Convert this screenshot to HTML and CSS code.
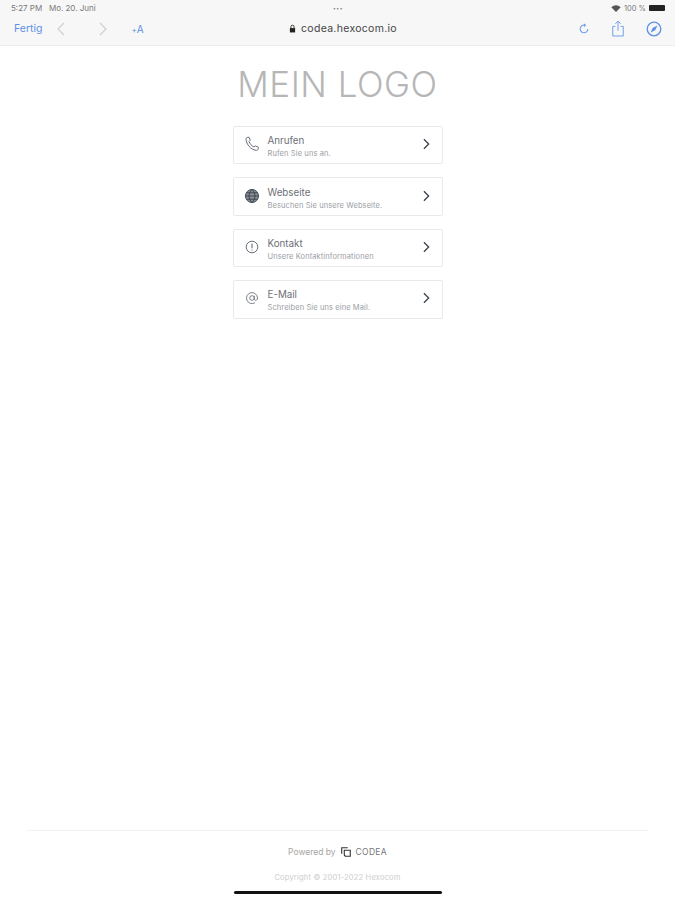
FILE: index.html
```html
<!DOCTYPE html>
<html lang="de">

<head>
    <meta charset="UTF-8">
    <title>codea.hexocom.io</title>
    <link rel="stylesheet" href="styles.css">
</head>

<body>
    <div class="page">
        <header class="browser">
            <div class="status">
                <span class="status-time">5:27 PM&nbsp;&nbsp; Mo. 20. Juni</span>
                <span class="status-dots">•••</span>
                <span class="status-right">
                    <svg class="wifi" viewBox="0 0 12 9" width="10" height="7"><path d="M6 9 0 2.800C3.500-.7 8.500-.7 12 2.800z" fill="#555"/></svg>
                    100 %
                    <span class="battery"></span>
                </span>
            </div>
            <div class="toolbar">
                <div class="tools">
                    <span class="done">Fertig</span>
                    <svg class="nav-back" viewBox="0 0 10 14" width="10" height="14"><path d="M8 1 2 7l6 6" fill="none" stroke="#cfcfd3" stroke-width="1.200"/></svg>
                    <svg class="nav-next" viewBox="0 0 10 14" width="10" height="14"><path d="m2 1 6 6-6 6" fill="none" stroke="#cfcfd3" stroke-width="1.200"/></svg>
                    <span class="reader"><small>+</small>A</span>
                </div>
                <div class="address">
                    <svg viewBox="0 0 8 10" width="7" height="9"><path d="M1 4.500h6V9.500H1z" fill="#222"/><path d="M2.200 4.500V3a1.800 1.800 0 0 1 3.600 0v1.500" fill="none" stroke="#222"/></svg>
                    codea.hexocom.io
                </div>
                <div class="actions">
                    <svg viewBox="0 0 14 14" width="12" height="13"><path d="M11.500 7.500a4.500 4.500 0 1 1-3-4.300" fill="none" stroke="#6f9be8" stroke-width="1.200"/><path d="M6.800 1 9.500 3.200 7 5.300z" fill="#6f9be8"/></svg>
                    <svg viewBox="0 0 16 20" width="14" height="18"><path d="M5 7H2v11h12V7h-3M8 12V1M5 4l3-3 3 3" fill="none" stroke="#6f9be8" stroke-width="1.100"/></svg>
                    <svg viewBox="0 0 16 16" width="16" height="16"><circle cx="8" cy="8" r="6.800" fill="none" stroke="#5f90e8" stroke-width="1.300"/><path d="M11.500 4.500 9.200 9.200 4.500 11.500 6.800 6.800z" fill="#5f90e8"/></svg>
                </div>
            </div>
        </header>

        <main class="content">
            <h1 class="logo">MEIN LOGO</h1>
            <ul class="links">
                <li class="link">
                    <svg class="link-icon" viewBox="0 0 16 16"><path d="M3.200 1.500 5 1.200l1.300 3-1.300 1.300c.8 2.200 2.500 4.200 5 5.500l1.300-1.200 3.200 1.500-.5 2c-.3.800-1 1.200-2 1C6.500 13.500 2.500 8.500 2 3.200c0-.8.500-1.500 1.200-1.700z" fill="none" stroke="#6a7078"/></svg>
                    <div class="link-text">
                        <span class="link-title">Anrufen</span>
                        <span class="link-sub">Rufen Sie uns an.</span>
                    </div>
                    <svg class="chevron" viewBox="0 0 10 14"><path d="m2 1.500 5.500 5.500L2 12.500" fill="none" stroke="#3a404b" stroke-width="1.500"/></svg>
                </li>
                <li class="link">
                    <svg class="link-icon" viewBox="0 0 16 16"><circle cx="8" cy="8" r="6.500" fill="#8a9098" stroke="#454b54"/><path d="M1.500 8h13M2.500 4.800h11M2.500 11.200h11M8 1.500c-4 4-4 9 0 13M8 1.500c4 4 4 9 0 13" fill="none" stroke="#33383f" stroke-width=".8"/></svg>
                    <div class="link-text">
                        <span class="link-title">Webseite</span>
                        <span class="link-sub">Besuchen Sie unsere Webseite.</span>
                    </div>
                    <svg class="chevron" viewBox="0 0 10 14"><path d="m2 1.500 5.500 5.500L2 12.500" fill="none" stroke="#3a404b" stroke-width="1.500"/></svg>
                </li>
                <li class="link">
                    <svg class="link-icon" viewBox="0 0 16 16"><circle cx="8" cy="8" r="5.800" fill="none" stroke="#6a7078"/><path d="M8 4.500v4.800M8 10.400v1.200" fill="none" stroke="#6a7078" stroke-width="1.100"/></svg>
                    <div class="link-text">
                        <span class="link-title">Kontakt</span>
                        <span class="link-sub">Unsere Kontaktinformationen</span>
                    </div>
                    <svg class="chevron" viewBox="0 0 10 14"><path d="m2 1.500 5.500 5.500L2 12.500" fill="none" stroke="#3a404b" stroke-width="1.500"/></svg>
                </li>
                <li class="link">
                    <svg class="link-icon" viewBox="0 0 16 16"><circle cx="8" cy="8" r="2.300" fill="none" stroke="#7c8189"/><path d="M10.300 5.700V9c0 2 3.200 2 3.200-1a5.500 5.500 0 1 0-2.500 4.700" fill="none" stroke="#7c8189"/></svg>
                    <div class="link-text">
                        <span class="link-title">E-Mail</span>
                        <span class="link-sub">Schreiben Sie uns eine Mail.</span>
                    </div>
                    <svg class="chevron" viewBox="0 0 10 14"><path d="m2 1.500 5.500 5.500L2 12.500" fill="none" stroke="#3a404b" stroke-width="1.500"/></svg>
                </li>
            </ul>
        </main>

        <footer class="footer">
            <div class="powered">
                <span>Powered by</span>
                <svg viewBox="0 0 14 14" width="12" height="12"><path d="M9 2H2v7M5 5h7v7H7.500C6 12 5 11 5 9.500z" fill="none" stroke="#333" stroke-width="1.300"/></svg>
                <span class="brand">CODEA</span>
            </div>
            <div class="copyright">Copyright © 2001-2022 Hexocom</div>
            <div class="home-bar"></div>
        </footer>
    </div>
</body>

</html>
```

FILE: styles.css
```css
* {
    box-sizing: border-box;
}

body {
    margin: 0;
    background-color: #fff;
    font-family: "Inter", "Liberation Sans", sans-serif;
}

.page {
    height: 900px;
    display: flex;
    flex-flow: column;
    overflow: hidden;
}

.browser {
    height: 46px;
    flex: none;
    background-color: #f7f7f8;
    border-bottom: 1px solid #ececed;
}

.status {
    height: 14px;
    padding: 2px 10px 0 11px;
    display: grid;
    grid-template-columns: 1fr auto 1fr;
    align-items: center;
    font-size: 7.500px;
    color: #777;
}

.status-time {
    font-size: 8px;
}

.status-dots {
    font-size: 5px;
    letter-spacing: 0.500px;
}

.status-right {
    display: flex;
    justify-content: flex-end;
    align-items: center;
    gap: 3px;
}

.battery {
    width: 16px;
    height: 6px;
    background-color: #222;
    border-radius: 1px;
}

.toolbar {
    height: 31px;
    padding: 0 13px 2px 14px;
    display: grid;
    grid-template-columns: 1fr auto 1fr;
    align-items: center;
}

.tools {
    display: flex;
    align-items: center;
}

.done {
    font-size: 10.500px;
    color: #5f90e8;
}

.nav-back {
    margin-left: 14px;
}

.nav-next {
    margin-left: 32px;
}

.reader {
    margin-left: 23px;
    font-size: 10px;
    color: #5f90e8;
}

.reader small {
    font-size: 8px;
}

.address {
    margin-left: 10px;
    display: flex;
    align-items: center;
    gap: 5px;
    font-size: 10.500px;
    letter-spacing: 0.300px;
    color: #444;
}

.actions {
    display: flex;
    justify-content: flex-end;
    align-items: center;
    gap: 21px;
}

.content {
    flex: 1;
    display: flex;
    flex-flow: column;
    align-items: center;
}

.logo {
    margin: 18px 0 0;
    font-size: 35px;
    line-height: 40px;
    font-weight: 300;
    letter-spacing: 0.500px;
    color: #b6b6b6;
}

.links {
    width: 210px;
    margin: 22px 0 0;
    padding: 0;
    list-style: none;
    display: flex;
    flex-flow: column;
    gap: 13px;
}

.link {
    height: 38.400px;
    padding: 0 11px 0 10px;
    display: flex;
    align-items: center;
    background-color: #fff;
    border: 1px solid #e8eaee;
    border-radius: 2px;
}

.link-icon {
    width: 16px;
    height: 16px;
    margin-top: -2px;
    flex: none;
}

.link-text {
    margin: 3px 0 0 8px;
    flex: 1;
    display: flex;
    flex-flow: column;
    gap: 2px;
}

.link-title {
    font-size: 9.800px;
    line-height: 12px;
    color: #6c7077;
}

.link-sub {
    font-size: 7.500px;
    line-height: 9px;
    letter-spacing: 0.100px;
    color: #9a9ea4;
}

.chevron {
    width: 9px;
    height: 12px;
    margin-top: -2px;
    flex: none;
}

.footer {
    height: 70px;
    flex: none;
    margin: 0 27px;
    border-top: 1px solid #f3f3f4;
    display: flex;
    flex-flow: column;
    align-items: center;
}

.powered {
    margin-top: 15px;
    display: flex;
    align-items: center;
    gap: 4px;
    font-size: 8.500px;
    color: #a5a5a5;
}

.brand {
    font-size: 8.500px;
    letter-spacing: 0.300px;
    color: #777;
}

.copyright {
    margin-top: 15px;
    font-size: 7.500px;
    letter-spacing: 0.200px;
    color: #cdcdcd;
}

.home-bar {
    width: 208px;
    height: 3px;
    margin-top: 9px;
    background-color: #111;
    border-radius: 2px;
}
```
